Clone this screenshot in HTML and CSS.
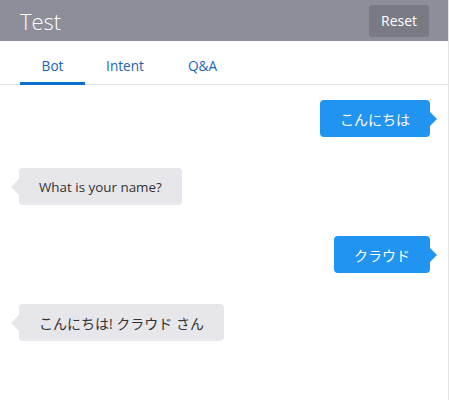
FILE: index.html
```html
<!DOCTYPE html>
<html>
<head>
<meta charset="utf-8">
<link rel="stylesheet" href="styles.css">
</head>
<body>
<div class="app">
  <header class="header">
    <h1 class="title">Test</h1>
    <button class="reset">Reset</button>
  </header>
  <nav class="tabs">
    <span class="tab active">Bot</span>
    <span class="tab tab-intent">Intent</span>
    <span class="tab tab-qa">Q&amp;A</span>
  </nav>
  <main class="chat">
    <div class="row user"><div class="bubble user">こんにちは</div></div>
    <div class="row bot"><div class="bubble bot latin">What is your name?</div></div>
    <div class="row user"><div class="bubble user">クラウド</div></div>
    <div class="row bot"><div class="bubble bot">こんにちは! クラウド さん</div></div>
  </main>
</div>
</body>
</html>
```
FILE: styles.css
```css
html, body {
  margin: 0;
  padding: 0;
  background: #fff;
}
body {
  font-family: "Open Sans", "Noto Sans CJK JP", sans-serif;
  font-size: 14px;
  color: #333;
}
.app {
  width: 448px;
  height: 400px;
  border-right: 1px solid #e3e6ea;
  display: flex;
  flex-direction: column;
}
.header {
  height: 41px;
  background: #8c8e99;
  display: flex;
  align-items: center;
  justify-content: space-between;
  padding: 0 19px 0 20px;
}
.title {
  margin: 0;
  font-weight: 300;
  font-size: 22px;
  color: #fff;
  font-family: "Open Sans", sans-serif;
}
.reset {
  width: 60px;
  height: 32px;
  border: none;
  border-radius: 3px;
  background: #797a84;
  color: #fff;
  font-family: "Open Sans", sans-serif;
  font-size: 14px;
  padding: 0;
}
.tabs {
  height: 43px;
  display: flex;
  padding-left: 20px;
  border-bottom: 1px solid #dde2e7;
}
.tab {
  width: 65px;
  display: flex;
  align-items: center;
  justify-content: center;
  color: #1a64b4;
  font-size: 13.6px;
  padding-top: 7px;
  box-sizing: border-box;
  border-bottom: 3px solid transparent;
  margin-bottom: -1px;
}
.tab-intent { margin-left: 7.5px; }
.tab-qa { margin-left: 12.5px; }
.tab.active {
  border-bottom-color: #0a70d2;
}
.chat {
  display: flex;
  flex-direction: column;
  gap: 31px;
  padding: 15px 18px 0 19px;
}
.row {
  display: flex;
}
.row.user { justify-content: flex-end; }
.row.bot { justify-content: flex-start; }
.bubble {
  position: relative;
  height: 37px;
  box-sizing: border-box;
  padding: 0 20px;
  display: flex;
  align-items: center;
  border-radius: 4px;
  font-size: 14px;
}
.bubble.latin {
  font-size: 13.4px;
}
.bubble.user {
  background: #2193f1;
  color: #fff;
}
.bubble.bot {
  background: #e6e6eb;
  color: #333;
}
.bubble.user::after {
  content: "";
  position: absolute;
  right: -7px;
  top: 12px;
  border-top: 7px solid transparent;
  border-bottom: 7px solid transparent;
  border-left: 7px solid #2193f1;
}
.bubble.bot::before {
  content: "";
  position: absolute;
  left: -8px;
  top: 11px;
  border-top: 8px solid transparent;
  border-bottom: 8px solid transparent;
  border-right: 8px solid #e6e6eb;
}
```
